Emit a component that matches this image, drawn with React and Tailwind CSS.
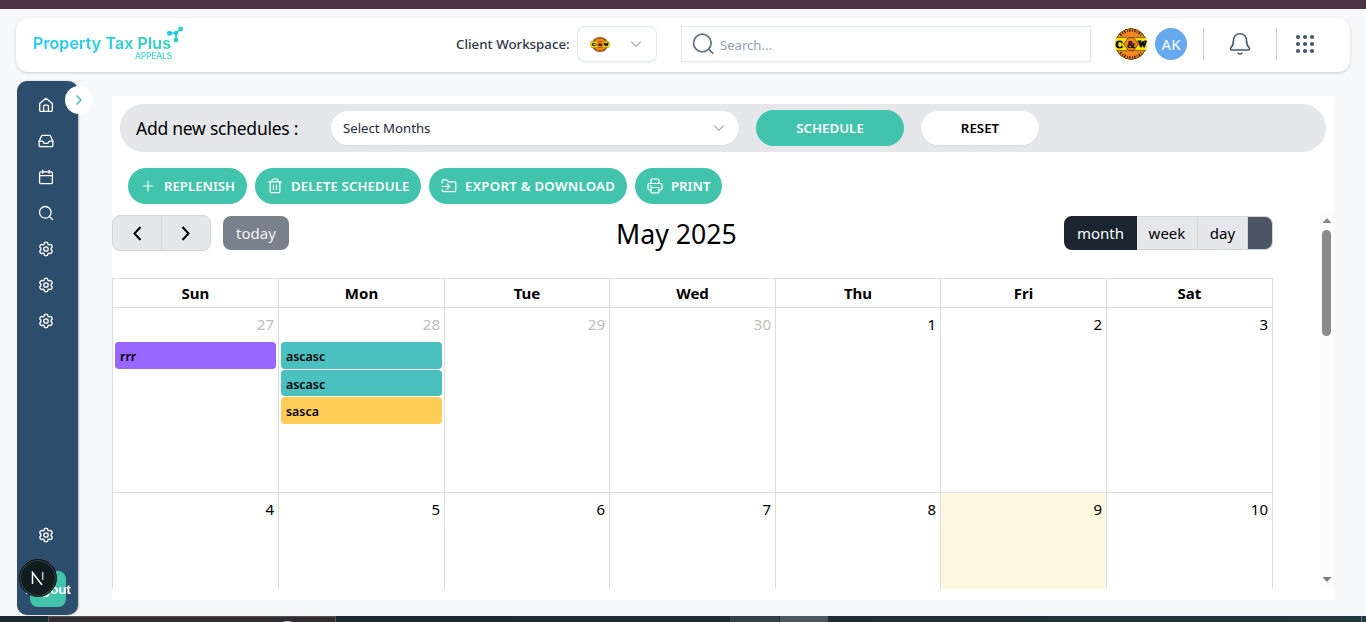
import React from "react";

const sv = { fill: "none", stroke: "currentColor", strokeLinecap: "round", strokeLinejoin: "round" };

function HomeIcon() {
  return (
    <svg {...sv} width="16" height="16" viewBox="0 0 16 16" strokeWidth="1.3">
      <path d="M1.700 6.500 8 1.300l6.300 5.200V13.200a1.200 1.200 0 0 1-1.200 1.200H2.900a1.200 1.200 0 0 1-1.200-1.200Z" />
      <path d="M5.600 14.200V9.300A1.200 1.200 0 0 1 6.800 8.100h2.400a1.200 1.200 0 0 1 1.200 1.200v4.900" />
    </svg>
  );
}
function InboxIcon() {
  return (
    <svg {...sv} width="16" height="16" viewBox="0 0 16 16" strokeWidth="1.3">
      <path d="M1.100 8.200h3.600l1.500 2.200h3.600l1.500-2.200h3.600v4a1.400 1.400 0 0 1-1.400 1.400H2.500a1.400 1.400 0 0 1-1.400-1.400Z" />
      <path d="M1.100 8.200 3.500 3.100a1.200 1.200 0 0 1 1.100-.7h6.800a1.200 1.200 0 0 1 1.100.7l2.400 5.100" />
    </svg>
  );
}
function CalendarIcon() {
  return (
    <svg {...sv} width="16" height="16" viewBox="0 0 16 16" strokeWidth="1.300">
      <rect x="1.600" y="2.800" width="12.800" height="11.900" rx="1.300" />
      <path d="M1.600 6.600h12.800M4.800 1.200v3M11.200 1.200v3" />
    </svg>
  );
}
function SearchIcon() {
  return (
    <svg {...sv} width="16" height="16" viewBox="0 0 16 16" strokeWidth="1.300">
      <circle cx="7.300" cy="7.300" r="5.800" />
      <path d="m11.500 11.500 3 3" />
    </svg>
  );
}
function GearIcon() {
  return (
    <svg {...sv} width="16" height="16" viewBox="0 0 24 24" strokeWidth="2">
      <path d="M9.600 2.700Q12 .8 14.400 2.700l.5 2.200 1.500.9 2.300-.6Q21.300 6.300 21.400 9l-1.700 1.900v2.200L21.400 15q-.1 2.700-2.700 3.800l-2.300-.6-1.500.9-.5 2.200Q12 23.200 9.600 21.300l-.5-2.200-1.500-.9-2.300.6Q2.700 17.700 2.600 15l1.700-1.900v-2.200L2.600 9q.1-2.700 2.700-3.800l2.300.6 1.500-.9Z" />
      <circle cx="12" cy="12" r="3.300" />
    </svg>
  );
}
function PlusIcon() {
  return (
    <svg {...sv} width="16" height="16" viewBox="0 0 16 16" strokeWidth="1.100">
      <path d="M8 3v10M3 8h10" />
    </svg>
  );
}
function TrashIcon() {
  return (
    <svg {...sv} width="16" height="16" viewBox="0 0 16 16" strokeWidth="1.200">
      <path d="M1.700 3.800h12.600M5 3.700V2.200A1.200 1.200 0 0 1 6.200 1h3.600A1.200 1.200 0 0 1 11 2.200v1.500M3.100 3.800v9.600a1.300 1.300 0 0 0 1.300 1.300h7.200a1.300 1.300 0 0 0 1.300-1.300V3.800M6.500 7v4.500M9.500 7v4.500" />
    </svg>
  );
}
function ExportIcon() {
  return (
    <svg {...sv} width="16" height="16" viewBox="0 0 16 16" strokeWidth="1.200">
      <path d="M1.200 5V2.900a1 1 0 0 1 1-1h3.300l2 2h6.300a1 1 0 0 1 1 1v7.700a1 1 0 0 1-1 1H2.200a1 1 0 0 1-1-1v-.8M1 8.500h7.500M6 6l2.600 2.500L6 11" />
    </svg>
  );
}
function PrintIcon() {
  return (
    <svg {...sv} width="16" height="16" viewBox="0 0 16 16" strokeWidth="1.200">
      <path d="M4 5.500V2a1 1 0 0 1 1-1h6a1 1 0 0 1 1 1v3.500M3.800 11.800H2.200a1.200 1.200 0 0 1-1.200-1.200V6.700a1.200 1.200 0 0 1 1.200-1.200h11.600A1.200 1.200 0 0 1 15 6.700v3.900a1.200 1.200 0 0 1-1.200 1.200h-1.600M3 8h1.500" />
      <rect x="4" y="9.500" width="8" height="5.300" rx=".8" />
    </svg>
  );
}
function Chevron({ className }) {
  return (
    <svg {...sv} className={className} width="12" height="12" viewBox="0 0 12 12" strokeWidth="1.200">
      <path d="m1.700 4 4.300 4.300L10.300 4" />
    </svg>
  );
}

function CompanyBadge({ width, height, clip }) {
  return (
    <svg width={width} height={height} viewBox={clip ? "3 0 32 32" : "0 0 38 32"} preserveAspectRatio="none" className={clip ? "rounded-full" : ""}>
      <circle cx="19" cy="16" r="15.500" fill="#f4861f" stroke="#6b4613" strokeWidth="1" />
      <path d="M8.500 7.500A13.500 13.500 0 0 1 29.500 7.500M8.500 24.500A13.500 13.500 0 0 0 29.500 24.500" fill="none" stroke="#3f270b" strokeWidth="2.600" strokeDasharray="1.400 1.500 .8 1.300" />
      <path d="M2 9.500h13L17 12h4l2-2.500h12.500L38 16l-2.500 6.500H23L21 20h-4l-2 2.500H2.500L0 16Z" fill="#fde005" stroke="#5d4d08" strokeWidth=".7" />
      <path d="M11.500 16 16.500 9.500h5L26.500 16l-5 6.500h-5Z" fill="#f4861f" stroke="#3b2508" strokeWidth=".7" />
      <g fontFamily="Liberation Serif, serif" fontWeight="700" fill="#0c0a05" stroke="#0c0a05" textAnchor="middle">
        <text x="7" y="19.500" fontSize="10" strokeWidth=".9">C</text>
        <text x="19" y="19.700" fontSize="10.500" strokeWidth=".3">&amp;</text>
        <text x="30.300" y="19.300" fontSize="8.500" strokeWidth="1">W</text>
      </g>
    </svg>
  );
}

function Logo() {
  return (
    <div className="relative h-[36px] w-[152px] font-['Inter',sans-serif]">
      <div className="w-[141px] bg-linear-to-r from-[#20c8fb] to-[#2bd3b5] bg-clip-text pt-[7px] text-[16px] leading-[20px] font-semibold tracking-[0.100px] whitespace-nowrap text-transparent">
        Property Tax Plus
      </div>
      <div className="mt-[-1px] ml-[102px] w-[40px] bg-linear-to-r from-[#38d6ee] to-[#2bcdb5] bg-clip-text text-[8.5px] leading-[8px] font-medium tracking-[-0.2px] text-transparent">APPEALS</div>
      <svg className="absolute top-0 left-[132px]" width="20" height="17" viewBox="0 0 20 17">
        <path d="M4 7h7v7M11 7l4.500-4" stroke="#25cbdc" strokeWidth="1.500" fill="none" />
        <circle cx="4.500" cy="7.200" r="2.500" fill="#1fc6f5" />
        <circle cx="11" cy="7" r="2.300" fill="#25cce6" />
        <circle cx="15.700" cy="3" r="2.400" fill="#2bd3bd" />
        <circle cx="11" cy="14" r="2.400" fill="#2bd3bd" />
      </svg>
    </div>
  );
}

function Header() {
  return (
    <header className="mx-4 mt-[9px] flex h-[54px] shrink-0 items-center rounded-xl bg-white pb-[2px] pl-[17px] shadow-[0_1px_3px_rgba(0,0,0,0.18)]">
      <Logo />
      <span className="ml-[271px] w-[114px] pt-px text-[13.300px] font-medium whitespace-nowrap text-[#2d3748]">Client Workspace:</span>
      <div className="ml-[7px] flex h-9 w-20 items-center rounded-lg border border-[#e2e8f0] bg-white pl-3 shadow-xs">
        <CompanyBadge width={20} height={15} />
        <Chevron className="ml-5 text-[#a3aebd]" />
      </div>
      <div className="ml-6 flex h-9 w-[410px] items-center border border-[#e2e8f0] pl-[9px] shadow-xs">
        <svg {...sv} className="text-[#64748b]" width="24" height="24" viewBox="0 0 24 24" strokeWidth="1.800">
          <circle cx="11.300" cy="11" r="8.800" />
          <path d="m17.800 17.400 4 3.800" />
        </svg>
        <span className="ml-[5px] pt-[3px] text-[13.100px] text-[#94a0b0]">Search...</span>
      </div>
      <div className="ml-6 size-8 rounded-full"><CompanyBadge width={32} height={32} clip /></div>
      <div className="ml-2 flex size-8 items-center justify-center rounded-full bg-[#66a9ef] text-[15px] text-white">AK</div>
      <div className="ml-4 h-8 w-px bg-[#cbd0d8]" />
      <svg {...sv} className="ml-6 text-[#475569]" width="24" height="24" viewBox="0 0 24 24" strokeWidth="1.600">
        <path d="M12 1.800c-4 0-6.500 2.800-6.500 6.500 0 3.400-.5 5.500-2.500 7.500-.8.900-.5 2.200.6 2.200h16.800c1.100 0 1.400-1.300.6-2.200-2-2-2.500-4.100-2.500-7.500 0-3.700-2.500-6.500-6.500-6.500ZM10.200 21.200c1 1.100 2.600 1.100 3.600 0" />
      </svg>
      <div className="ml-6 h-8 w-px bg-[#cbd0d8]" />
      <svg className="ml-[18px] text-[#4a5568]" width="20" height="20" viewBox="0 0 20 20" fill="currentColor">
        {[3, 10, 17].map((y) => [3, 10, 17].map((x) => <circle key={`${x}-${y}`} cx={x} cy={y} r="2.100" />))}
      </svg>
    </header>
  );
}

function Sidebar() {
  return (
    <aside className="relative ml-[17px] flex h-[534px] w-[61px] shrink-0 flex-col items-center rounded-[10px] bg-[#2c4d6b] pt-4 text-white shadow-[1px_0_2px_rgba(0,0,0,0.25)]">
      <nav className="-ml-[3px] flex flex-col gap-5">
        <HomeIcon /><InboxIcon /><CalendarIcon /><SearchIcon /><GearIcon /><GearIcon /><GearIcon />
      </nav>
      <div className="mt-[198px] -ml-[3px]"><GearIcon /></div>
      <div className="mt-[28px] flex h-9 w-9 items-center justify-center rounded-lg bg-[#41c3ac] pt-[2px] pl-px font-['Liberation_Sans',sans-serif] text-[13.500px] font-bold">Logout</div>
      <div className="absolute top-[5px] left-12 flex size-7 items-center justify-center rounded-full bg-white">
        <svg {...sv} width="12" height="12" viewBox="0 0 12 12" strokeWidth="1.400" className="text-[#3fbda8]"><path d="m4 2 4 4-4 4" /></svg>
      </div>
      <div className="absolute top-[478px] left-[2px] flex size-[38px] items-center justify-center rounded-full border border-[#0b1212] bg-[#101c1d] shadow-[inset_0_0_0_1px_#3d4748]">
        <svg width="14" height="14" viewBox="0 0 14 14" fill="none" stroke="white" strokeWidth="1.500">
          <path d="M1.500 13V1.500L11 14" />
          <path d="M11.700 1v8" strokeOpacity=".75" />
        </svg>
      </div>
    </aside>
  );
}

function ActionButton({ icon, className, children }) {
  return (
    <button className={`flex h-9 items-center gap-2 rounded-full bg-[#41c3ac] pl-3 text-[13.200px] font-semibold whitespace-nowrap text-white ${className}`}>
      {icon}<span className="pt-px">{children}</span>
    </button>
  );
}

function Event({ color, children }) {
  return <div className={`mb-px ml-[2px] mr-[2px] h-[26.500px] rounded-[4px] pl-[5px] text-[12.400px] leading-[29px] font-semibold text-black ${color}`}>{children}</div>;
}

function Day({ n, muted, today, children }) {
  return (
    <div className={`border-r border-[#dddddd] ${today ? "bg-[#fff8e0]" : ""}`}>
      <div className={`h-[34px] pr-1 text-right text-[15px] leading-[32px] ${muted ? "text-[#bcbcbc]" : "text-black"}`}>{n}</div>
      {children}
    </div>
  );
}

const days = ["Sun", "Mon", "Tue", "Wed", "Thu", "Fri", "Sat"];

function Calendar() {
  return (
    <div className="mt-[27px] flex h-[311px] w-[1161px] flex-col overflow-hidden border-t border-l border-[#dddddd]">
      <div className="grid h-[29px] shrink-0 grid-cols-[166px_166px_165px_166px_165px_166px_166px] border-b border-[#dddddd]">
        {days.map((d) => <div key={d} className="border-r border-[#dddddd] text-center text-[15px] leading-[29px] font-bold">{d}</div>)}
      </div>
      <div className="grid h-[185px] shrink-0 grid-cols-[166px_166px_165px_166px_165px_166px_166px] border-b border-[#dddddd]">
        <Day n="27" muted><Event color="bg-[#9966ff]">rrr</Event></Day>
        <Day n="28" muted>
          <Event color="bg-[#4bc0c0]">ascasc</Event>
          <Event color="bg-[#4bc0c0]">ascasc</Event>
          <Event color="bg-[#ffcd56]">sasca</Event>
        </Day>
        <Day n="29" muted /><Day n="30" muted /><Day n="1" /><Day n="2" /><Day n="3" />
      </div>
      <div className="grid grow grid-cols-[166px_166px_165px_166px_165px_166px_166px]">
        {[4, 5, 6, 7, 8, 9, 10].map((n) => <Day key={n} n={n} today={n === 9} />)}
      </div>
    </div>
  );
}

function Toolbar() {
  return (
    <div className="flex h-9 w-[1161px] items-center justify-between">
      <div className="flex w-[340px] items-center">
        <div className="flex h-9 w-[99px] overflow-hidden rounded-lg border border-[#d1d5db] bg-[#e5e7eb]">
          <div className="flex w-[49px] items-center justify-center border-r border-[#d1d5db]">
            <svg width="16" height="16" viewBox="0 0 16 16" fill="none" stroke="black" strokeWidth="2"><path d="M11.500 2 5.500 8.500l6 6.500" /></svg>
          </div>
          <div className="flex grow items-center justify-center">
            <svg width="16" height="16" viewBox="0 0 16 16" fill="none" stroke="black" strokeWidth="2"><path d="M4.500 2l6 6.500-6 6.500" /></svg>
          </div>
        </div>
        <div className="ml-3 flex h-[34px] w-[66px] items-center justify-center rounded-lg bg-[#79818d] text-[15px] text-[#f3f4f6]">today</div>
      </div>
      <h2 className="ml-[-32px] pt-[2px] text-[26.700px] leading-9 whitespace-nowrap text-black">May 2025</h2>
      <div className="flex w-[340px] justify-end">
        <div className="flex h-[34px] w-[209px] overflow-hidden rounded-lg bg-[#e5e7eb] text-[15px] leading-[34px] text-black">
          <div className="w-[73px] bg-[#1a252f] text-center text-white">month</div>
          <div className="w-[61px] border-y border-r border-[#d1d5db] text-center leading-[32px]">week</div>
          <div className="w-[50px] border-y border-r border-[#d1d5db] text-center leading-[32px]">day</div>
          <div className="grow rounded-r-lg border-y border-r border-[#d1d5db] bg-[#4b5563]" />
        </div>
      </div>
    </div>
  );
}

function Main() {
  return (
    <main className="mt-[15px] ml-[34px] flex h-[504px] w-[1222px] flex-col rounded bg-white">
      <div className="mx-2 mt-2 flex h-12 shrink-0 items-center rounded-full bg-[#e5e7eb] pl-4">
        <span className="w-[195px] text-[17.500px] tracking-[-0.250px] whitespace-nowrap text-black">Add new schedules :</span>
        <div className="flex h-[34px] w-[408px] items-center justify-between rounded-full bg-white pr-[14px] pl-3 text-[13.200px] text-[#1f2937] shadow-xs">
          <span className="pt-px">Select Months</span><Chevron className="text-[#a3aebd]" />
        </div>
        <div className="ml-[17px] flex h-9 w-[148px] items-center justify-center rounded-full bg-[#41c3ac] pt-px text-[13.300px] font-semibold text-white">SCHEDULE</div>
        <div className="ml-[17px] flex h-[34px] w-[118px] items-center justify-center rounded-full bg-white pt-px text-[13.300px] font-semibold text-black shadow-xs">RESET</div>
      </div>
      <div className="mt-4 ml-4 flex shrink-0 gap-2">
        <ActionButton className="w-[119px]" icon={<PlusIcon />}>REPLENISH</ActionButton>
        <ActionButton className="w-[166px] tracking-[0.100px]" icon={<TrashIcon />}>DELETE SCHEDULE</ActionButton>
        <ActionButton className="w-[198px] tracking-[0.280px]" icon={<ExportIcon />}>EXPORT &amp; DOWNLOAD</ActionButton>
        <ActionButton className="w-[87px]" icon={<PrintIcon />}>PRINT</ActionButton>
      </div>
      <div className="mt-2 flex h-[377px] justify-between">
        <div className="pt-[3px]">
          <Toolbar />
          <Calendar />
        </div>
        <div className="flex w-[15px] flex-col items-center bg-[#fcfcfc] pt-[6px] pb-[7px]">
          <svg width="10" height="5" viewBox="0 0 10 5"><path d="M.5 5 5 0l4.500 5Z" fill="#8b8b8b" /></svg>
          <div className="mt-[7px] h-[106px] w-[9px] rounded-full bg-[#8b8b8b]" />
          <svg className="mt-auto" width="10" height="5" viewBox="0 0 10 5"><path d="M.5 0 5 5l4.500-5Z" fill="#7b7b7b" /></svg>
        </div>
      </div>
    </main>
  );
}

export default function App() {
  return (
    <div className="flex h-[622px] w-[1366px] flex-col overflow-hidden bg-[#f7f8fa] font-['Noto_Sans',sans-serif]">
      <div className="h-[9px] shrink-0 bg-[#4b3545]" />
      <Header />
      <div className="mt-[9px] flex h-[535px] shrink-0">
        <Sidebar />
        <Main />
      </div>
      <div className="flex h-[6px] shrink-0 bg-linear-to-r from-[#1b2b30] via-[#1e2b32] to-[#22383f]">
        <div className="ml-12 flex h-[6px] w-[288px] border border-b-0 border-[#55504e] bg-[#302d30]">
          <div className="mt-[4px] ml-[234px] h-[2px] w-[9px] rounded-t bg-[#c9a3bf]" />
        </div>
        <div className="ml-[394px] w-[49px] bg-[#344145]" />
        <div className="ml-px w-[48px] bg-[#4d585c]" />
        <div className="mr-[4px] ml-auto w-px bg-[#6d7b80]" />
      </div>
    </div>
  );
}
